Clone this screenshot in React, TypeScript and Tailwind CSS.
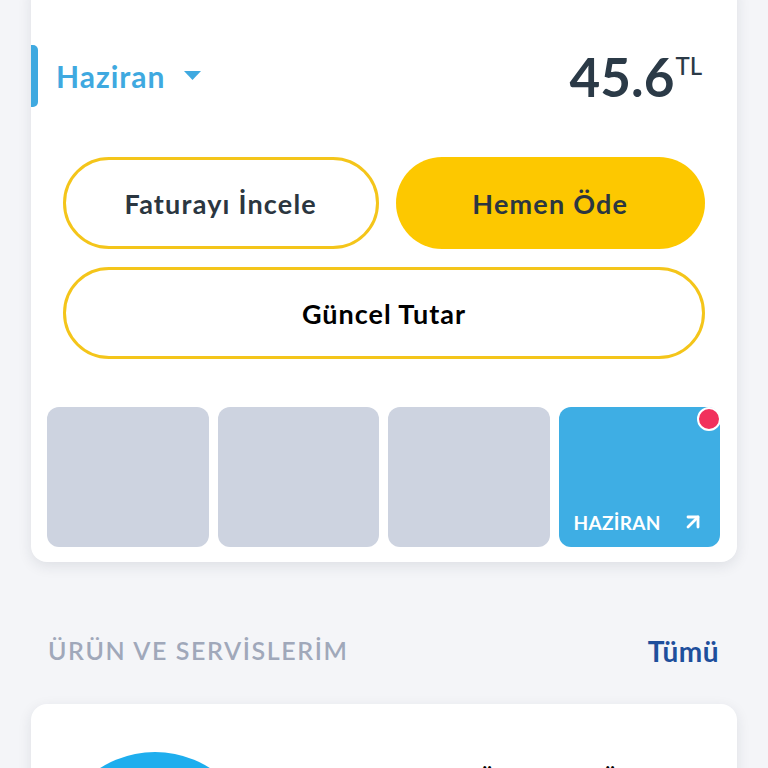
import { ArrowUpRight } from "lucide-react";

const TILES = [
  { id: 1, label: "", active: false },
  { id: 2, label: "", active: false },
  { id: 3, label: "", active: false },
  { id: 4, label: "HAZİRAN", active: true },
];

export default function App() {
  return (
    <div
      className="h-[768px] overflow-hidden bg-[#f4f5f8] px-[31px]"
      style={{ fontFamily: "Lato, 'Noto Sans', sans-serif" }}
    >
      {/* Bill card */}
      <div className="-mt-5 rounded-[16px] bg-white pt-[65px] pb-[15px] shadow-[0_4px_14px_rgba(30,40,60,0.10)]">
        <div className="flex h-[62px] items-center">
          <div className="h-full w-[7px] rounded-r-[5px] bg-[#3fa9e0]" />
          <div className="ml-[18px] flex items-center gap-[18px]">
            <span className="text-[30px] font-bold tracking-[1px] text-[#3fa9e0]">Haziran</span>
            <svg width="17" height="9" viewBox="0 0 17 9" className="mt-[-2px]">
              <polygon points="0,0 17,0 8.5,9" fill="#3fa9e0" />
            </svg>
          </div>
          <div className="ml-auto mr-[35px] flex items-start text-[#2b3a47]">
            <span className="text-[53px] font-bold leading-none">45.6</span>
            <span className="ml-[1px] mt-[4px] text-[24px] font-medium leading-none">TL</span>
          </div>
        </div>

        <div className="mt-[50px] flex flex-col gap-[18px] px-[32px]">
          <div className="flex gap-[17px]">
            <button className="flex h-[92px] flex-1 items-center justify-center rounded-full border-[3px] border-[#f4c51a] bg-white pt-[3px] text-[27px] font-bold tracking-[1.2px] text-[#2b3640]">
              Faturayı İncele
            </button>
            <button className="flex h-[92px] flex-1 items-center justify-center rounded-full bg-[#fdc800] pt-[3px] text-[27px] font-bold tracking-[1.2px] text-[#2b3640]">
              Hemen Öde
            </button>
          </div>
          <button className="flex h-[92px] items-center justify-center rounded-full border-[3px] border-[#f4c51a] bg-white pt-[3px] text-[27px] font-bold tracking-[1px] text-black">
            Güncel Tutar
          </button>
        </div>

        <div className="mt-[48px] grid grid-cols-4 gap-[9px] pl-[16px] pr-[17px]">
          {TILES.map((t) =>
            t.active ? (
              <div key={t.id} className="relative flex h-[140px] items-end justify-between rounded-[12px] bg-[#3eaee4] px-[15px] pb-[10px]">
                <span className="text-[19px] font-bold tracking-[0.3px] text-white">{t.label}</span>
                <ArrowUpRight className="mb-[3px] h-[24px] w-[24px] text-white" strokeWidth={2.8} />
                <span className="absolute -right-[1px] top-[0px] h-[24px] w-[24px] rounded-full border-2 border-white bg-[#f1315c]" />
              </div>
            ) : (
              <div key={t.id} className="h-[140px] rounded-[12px] bg-[#cdd3e0]" />
            )
          )}
        </div>
      </div>

      {/* Products section */}
      <div className="mt-[69px] flex h-[40px] items-center justify-between pl-[17px] pr-[18px]">
        <span className="text-[25px] font-semibold tracking-[1.6px] text-[#a0a8ba]">ÜRÜN VE SERVİSLERİM</span>
        <span className="text-[28px] font-bold tracking-[0.5px] text-[#1e4f9c]">Tümü</span>
      </div>

      <div className="mt-[33px] flex h-[300px] rounded-[16px] bg-white pt-[48px] pl-[22px] shadow-[0_4px_14px_rgba(30,40,60,0.10)]">
        <div className="h-[204px] w-[204px] shrink-0 rounded-full bg-[#1eaeee]" />
        <div className="ml-[210px] mt-[10px] text-[22px] font-bold text-black">SÜPER HIZLI ÖDEME</div>
      </div>
    </div>
  );
}
